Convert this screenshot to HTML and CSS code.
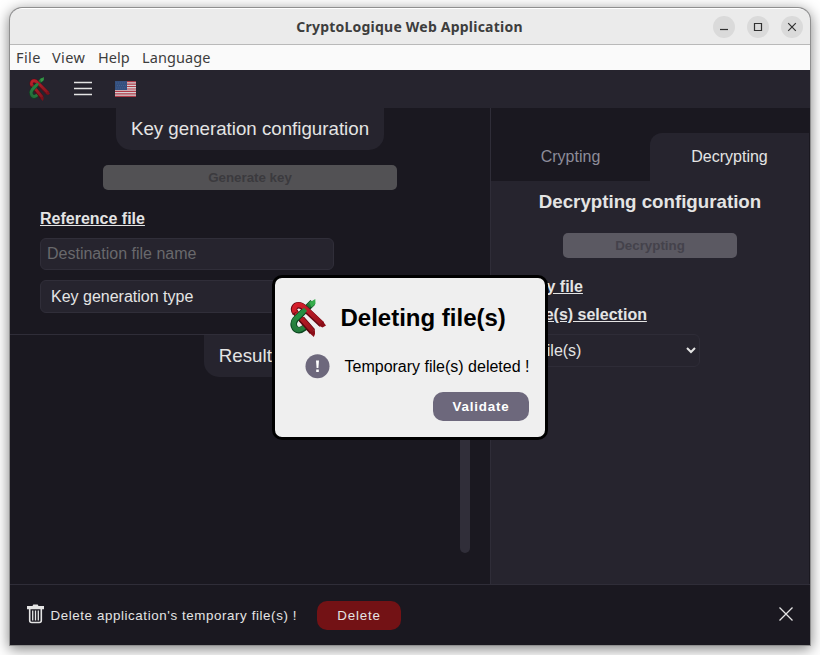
FILE: index.html
```html
<!DOCTYPE html>
<html lang="en">
<head>
<meta charset="utf-8">
<title>CryptoLogique Web Application</title>
<link rel="stylesheet" href="styles.css">
</head>
<body>
<svg class="defs" width="0" height="0" aria-hidden="true">
  <defs>
    <linearGradient id="red" gradientUnits="userSpaceOnUse" x1="4" y1="4" x2="28" y2="36"><stop offset="0" stop-color="#dc1f2b"/><stop offset=".5" stop-color="#b01a24"/><stop offset="1" stop-color="#8c0f18"/></linearGradient>
    <linearGradient id="green" gradientUnits="userSpaceOnUse" x1="25" y1="0" x2="5" y2="32"><stop offset="0" stop-color="#46c255"/><stop offset=".3" stop-color="#17602f"/><stop offset=".6" stop-color="#2c8d45"/><stop offset="1" stop-color="#237a3b"/></linearGradient>
    <symbol id="logo" viewBox="0 0 36 38">
      <g fill="none">
        <path d="M5 13L22 32.500" stroke="#5c0710" stroke-width="6"/>
        <path d="M5.300 12.700L22.300 32" stroke="url(#red)" stroke-width="4.400"/>
        <path d="M22.800 3.300L5.500 20.500C2 24.500 4 31.200 9 31.200C12.500 31.200 14 28.500 17.500 26.500" stroke="#0d4721" stroke-width="6.600"/>
        <path d="M22.500 3.100L5.300 20.200C2 24.500 4 30.900 9 30.900C12 30.900 13.500 28.200 16.500 26.500" stroke="url(#green)" stroke-width="4.600"/>
        <path d="M19.500 3.500L25.300 0L25.500 4.800L21.500 8.500Z" fill="#36ad4b"/>
        <path d="M11.500 20L22.500 32.500" stroke="#5c0710" stroke-width="6.800"/>
        <path d="M11.500 19.500L22.700 32" stroke="url(#red)" stroke-width="4.600"/>
        <path d="M19.500 34L24.900 30.800L25 35L23.800 38Z" fill="#8b0d17"/>
        <path d="M5.500 14C2.500 10 4.500 6.200 8.700 6.200C12 6.200 13 7.700 15 9.700L31.800 25.500" stroke="#680914" stroke-width="6.500"/>
        <path d="M5 13.500C3 9.500 5 5.900 8.700 5.900C12 5.900 13.200 7.200 15.200 9.200L32.300 25" stroke="url(#red)" stroke-width="4.600"/>
        <path d="M33 22.600L36 26.500L32.500 28.500L28.500 26.500Z" fill="#8b0d17"/>
        <path d="M15.500 10.300L6 19.700" stroke="#258f42" stroke-width="4.600"/>
      </g>
    </symbol>
  </defs>
</svg>
<div class="window">
  <header class="titlebar">
    <span class="title">CryptoLogique Web Application</span>
    <div class="controls">
      <span><svg width="22" height="22" viewBox="0 0 22 22"><path d="M7 13.500h8"/></svg></span>
      <span><svg width="22" height="22" viewBox="0 0 22 22"><path d="M7.500 7.500h7v7h-7z"/></svg></span>
      <span><svg width="22" height="22" viewBox="0 0 22 22"><path d="M7.200 7.200l7.600 7.600M14.800 7.200l-7.600 7.600"/></svg></span>
    </div>
  </header>
  <nav class="menubar"><span class="file">File</span><span class="view">View</span><span class="help">Help</span><span class="lang">Language</span></nav>
  <div class="toolbar">
    <svg class="brand" width="21" height="24" viewBox="0 0 36 38" preserveAspectRatio="none"><use href="#logo" width="36" height="38"/></svg>
    <svg class="burger" width="18" height="16" viewBox="0 0 18 16"><path d="M0 1.500h18M0 7.500h18M0 13.500h18"/></svg>
    <svg class="flag" width="21" height="16" viewBox="0 0 21 16">
      <path fill="#d5d0d2" d="M0 0h21v16H0z"/>
      <path stroke="#b03a48" stroke-width="1.200" d="M0 .6h21M0 3.100h21M0 5.500h21M0 8h21M0 10.400h21M0 12.900h21M0 15.400h21"/>
      <path fill="#34507f" d="M0 0h12v9H0z"/>
      <path stroke="#486391" stroke-width=".8" stroke-dasharray="1 1" d="M1 2h10M2 4.500h9M1 7h10"/>
    </svg>
  </div>
  <main class="workspace">
    <div class="left">
      <section class="keygen">
        <h3 class="heading">Key generation configuration</h3>
        <button class="action generate" disabled>Generate key</button>
        <div class="form">
          <div class="label">Reference file</div>
          <div class="field name">Destination file name</div>
          <div class="field type">Key generation type</div>
        </div>
      </section>
      <section class="results">
        <h3 class="heading">Results</h3>
        <div class="track"></div>
      </section>
    </div>
    <div class="right">
      <div class="tabs"><span class="tab">Crypting</span><span class="tab active">Decrypting</span></div>
      <h3 class="subtitle">Decrypting configuration</h3>
      <button class="action decrypt" disabled>Decrypting</button>
      <div class="options">
        <div class="label">Key file</div>
        <div class="label">File(s) selection</div>
        <div class="field select"><span>File(s)</span><svg width="10" height="7" viewBox="0 0 10 7"><path d="M1 1l4 4 4-4"/></svg></div>
      </div>
    </div>
  </main>
  <footer class="footer">
    <svg class="trash" width="17" height="20" viewBox="0 0 17 20">
      <path fill="#e4e4e4" d="M0 2h5.500l.8-1.500h4.400l.8 1.500H17v3.200H0z"/>
      <path fill="none" stroke="#e4e4e4" stroke-width="1.600" d="M2.700 5v11.500q0 2 2 2h7.600q2 0 2-2V5"/>
      <path stroke="#e4e4e4" stroke-width="1.300" d="M5.700 6.500v10M8.500 6.500v10M11.300 6.500v10"/>
    </svg>
    <span class="notice">Delete application's temporary file(s) !</span>
    <button class="delete">Delete</button>
    <svg class="close" width="14" height="14" viewBox="0 0 14 14"><path d="M.5.5l13 13M13.500.5l-13 13"/></svg>
  </footer>
  <div class="dialog">
    <div class="dialog-head"><svg width="36" height="38"><use href="#logo"/></svg><h2>Deleting file(s)</h2></div>
    <div class="message">
      <svg width="25" height="25" viewBox="0 0 25 25"><circle cx="12.500" cy="12.300" r="12" fill="#6d687c"/><path fill="#fff" d="M11 6.500h3l-.6 7.500h-1.800zM11.200 15.500h2.600V18h-2.600z"/></svg>
      <span>Temporary file(s) deleted !</span>
    </div>
    <button class="validate">Validate</button>
  </div>
</div>
</body>
</html>
```
FILE: styles.css
```css
* { box-sizing: border-box; }
body {
  margin: 0;
  height: 655px;
  padding: 8px 10px 10px;
  overflow: hidden;
  background: #fff;
  font: 16px "Liberation Sans", Arial, sans-serif;
  color: #e4e4e4;
}
.defs { position: absolute; }
svg { display: block; flex: none; }
h2, h3 { margin: 0; }
button { border: 0; padding: 0; font: 13.333px "Liberation Sans", Arial, sans-serif; }

.window {
  position: relative;
  height: 637px;
  display: flex;
  flex-direction: column;
  border-radius: 12px 12px 0 0;
  background: #1a1820;
  box-shadow: 0 0 0 1px #8f8f8f, 0 3px 14px 1px rgba(0, 0, 0, .5);
}
.titlebar {
  height: 37px;
  display: grid;
  grid-template-columns: 1fr auto 1fr;
  align-items: center;
  padding-right: 7px;
  background: #ebebeb;
  border-top: 1px solid #fff;
  border-bottom: 1px solid #b9b9b9;
  border-radius: 12px 12px 0 0;
}
.title {
  grid-column: 2;
  padding-left: 6px;
  font: bold 14px "Noto Sans", sans-serif;
  letter-spacing: 0.22px;
  color: #3d3d3d;
  white-space: nowrap;
}
.controls { display: flex; gap: 12px; justify-content: flex-end; }
.controls span { width: 22px; height: 22px; border-radius: 50%; background: #dadada; }
.controls path { fill: none; stroke: #303030; stroke-width: 1.2; }
.menubar {
  height: 25px;
  display: flex;
  gap: 12px;
  align-items: center;
  padding: 0 0 2px 6px;
  background: #fafafa;
  color: #3d3d3d;
  font: 14.5px "Noto Sans", sans-serif;
  white-space: nowrap;
}
.file { width: 24px; letter-spacing: 0.4px; }
.view { width: 34px; letter-spacing: 0.4px; }
.help { width: 32px; }
.lang { width: 68px; letter-spacing: 0.1px; }
.toolbar {
  height: 38px;
  display: flex;
  align-items: center;
  padding-left: 19px;
  background: #26242e;
}
.brand { opacity: .85; }
.burger { margin: 0 23px 0 24px; }
.burger path { stroke: #e4e4e4; stroke-width: 1.5; }

.workspace { height: 476px; display: flex; }
.left { width: 481px; border-right: 1px solid #2f2d38; }
.keygen {
  height: 227px;
  display: flex;
  flex-direction: column;
  align-items: center;
  border-bottom: 1px solid #2f2d38;
}
.heading {
  height: 42px;
  padding: 0 15px;
  border-radius: 0 0 15px 15px;
  background: #26242e;
  font-size: 18.72px;
  font-weight: 400;
  line-height: 41px;
}
.action {
  height: 25px;
  border-radius: 5px;
  font-weight: 700;
}
.generate { width: 294px; margin-top: 15px; background: #525154; color: #3b3a3e; }
.form { align-self: stretch; padding: 20px 30px 0; }
.label { height: 18px; line-height: 18px; font-weight: 700; text-decoration: underline; }
.field {
  height: 33px;
  line-height: 31px;
  border: 1px solid #302e39;
  border-radius: 6px;
  background: #26242e;
}
.name { width: 294px; height: 32px; line-height: 30px; margin: 10px 0 10px; padding-left: 6px; color: #69696c; }
.type { width: 294px; padding-left: 10px; }
.results {
  height: 249px;
  display: grid;
  grid-template-rows: 42px 1fr;
  justify-items: center;
}
.track { width: 10px; height: 150px; margin: 26px 20px 0 0; justify-self: end; border-radius: 5px; background: #302e39; }
.right { flex: 1; margin-right: 1px; background: #26242e; text-align: center; }
.tabs { height: 73px; display: flex; align-items: flex-end; background: #1a1820; }
.tab { flex: 1; height: 48px; line-height: 47px; color: #8d8c99; }
.active { border-radius: 12px 0 0; background: #26242e; color: #e4e4e4; }
.subtitle { height: 42px; padding-top: 10px; font-size: 18.72px; line-height: 22px; }
.decrypt { display: block; width: 174px; margin: 10px auto 20px; background: #5b5962; color: #44424b; }
.options { width: 184px; margin-left: 25px; text-align: left; }
.options .label { margin: 0 0 10px 10px; }
.select {
  display: flex;
  align-items: center;
  justify-content: space-between;
  padding: 0 3px 0 20px;
  border-color: #2e2c37;
}
.select path { fill: none; stroke: #e4e4e4; stroke-width: 2; }

.footer {
  height: 61px;
  display: flex;
  align-items: center;
  border-top: 1px solid #2f2d38;
  padding: 0 17px 0 16px;
}
.trash { margin: -3px 7px 0 0.5px; }
.notice { width: 247px; font-size: 13.333px; letter-spacing: 0.6px; white-space: nowrap; }
.delete {
  width: 84px;
  height: 29px;
  margin-left: 19.5px;
  border-radius: 10px;
  background: #731215;
  color: #e4e4e4;
  letter-spacing: 0.8px;
}
.close { margin: -3px 0 0 auto; }
.close path { stroke: #e4e4e4; stroke-width: 1.3; }

.dialog {
  position: absolute;
  left: 262px;
  top: 267px;
  width: 276px;
  height: 165px;
  padding: 21px 16px 0 15px;
  border: 3px solid #000;
  border-radius: 10px;
  background: #efefef;
  color: #000;
}
.dialog-head { display: flex; align-items: center; height: 38px; }
.dialog-head h2 { margin-left: 14.5px; font-size: 24px; line-height: 28px; white-space: nowrap; }
.message { display: flex; align-items: center; height: 25px; margin: 17px 0 13px 15px; white-space: nowrap; }
.message span { margin-left: 14.5px; }
.validate {
  display: block;
  width: 96px;
  height: 29px;
  margin-left: auto;
  border-radius: 10px;
  background: #6d687c;
  color: #fff;
  font-weight: 700;
  letter-spacing: 0.8px;
}
```
